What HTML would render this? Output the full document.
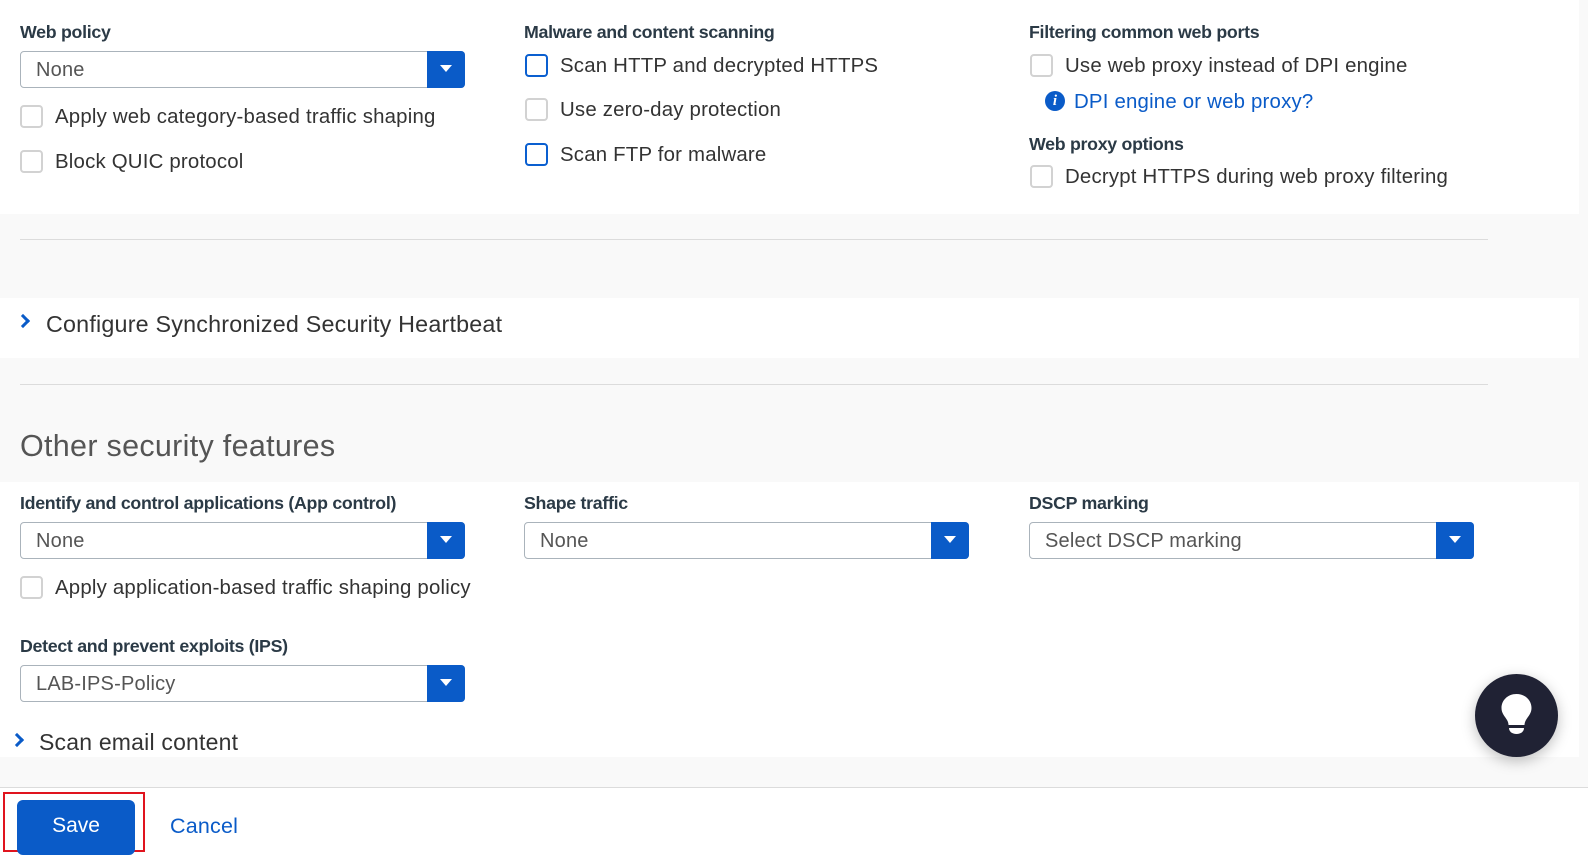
<!DOCTYPE html>
<html><head><meta charset="utf-8"><style>
*{box-sizing:border-box;margin:0;padding:0}
body{width:1588px;height:859px;background:#f9f9f9;font-family:"Liberation Sans",sans-serif;color:#333;position:relative;overflow:hidden}
.a{position:absolute}
.w{position:absolute;left:0;width:1579px;background:#fff}
.lbl{position:absolute;font-size:17.8px;font-weight:bold;color:#2b3a46;letter-spacing:-0.3px}
.t{position:absolute;font-size:20.4px;color:#333;white-space:nowrap;letter-spacing:0.2px;margin-top:2px}
.cb{position:absolute;width:23px;height:23px;border:2px solid #d2d2d2;border-radius:4px;background:#fff}
.cb.b{border-color:#0a5fd0}
.sel{position:absolute;width:445px;height:37px;border:1px solid #aab3bb;border-radius:4px;background:#fff}
.sel span{position:absolute;left:15px;top:7px;font-size:20px;color:#555;letter-spacing:0.2px}
.sel i{position:absolute;right:-1px;top:-1px;width:38px;height:37px;background:#0a5bc8;border-radius:0 4px 4px 0}
.sel i:after{content:"";position:absolute;left:13px;top:14px;border-left:6px solid transparent;border-right:6px solid transparent;border-top:7px solid #fff}
.hr{position:absolute;left:20px;width:1468px;height:1px;background:#dcdcdc}
.chev{position:absolute;width:10px;height:10px;border-right:3px solid #0a5bc8;border-bottom:3px solid #0a5bc8;transform:rotate(-45deg)}
</style></head><body>
<div class="w" style="top:0;height:214px"></div>
<div class="w" style="top:298px;height:60px"></div>
<div class="w" style="top:482px;height:275px"></div>
<div class="hr" style="top:239px"></div>
<div class="hr" style="top:384px"></div>

<div class="lbl" style="left:20px;top:22px">Web policy</div>
<div class="sel" style="left:20px;top:51px"><span>None</span><i></i></div>
<div class="cb" style="left:20px;top:105px"></div><div class="t" style="left:55px;top:104px">Apply web category-based traffic shaping</div>
<div class="cb" style="left:20px;top:150px"></div><div class="t" style="left:55px;top:149px">Block QUIC protocol</div>

<div class="lbl" style="left:524px;top:22px">Malware and content scanning</div>
<div class="cb b" style="left:525px;top:54px"></div><div class="t" style="left:560px;top:53px">Scan HTTP and decrypted HTTPS</div>
<div class="cb" style="left:525px;top:98px"></div><div class="t" style="left:560px;top:97px">Use zero-day protection</div>
<div class="cb b" style="left:525px;top:143px"></div><div class="t" style="left:560px;top:142px">Scan FTP for malware</div>

<div class="lbl" style="left:1029px;top:22px">Filtering common web ports</div>
<div class="cb" style="left:1030px;top:54px"></div><div class="t" style="left:1065px;top:53px">Use web proxy instead of DPI engine</div>
<div class="a" style="left:1045px;top:91px;width:20px;height:20px;border-radius:50%;background:#0a5bc8;color:#fff;font:italic bold 15px 'Liberation Serif',serif;text-align:center;line-height:20px">i</div>
<div class="t" style="left:1074px;top:89px;color:#0a5bc8">DPI engine or web proxy?</div>
<div class="lbl" style="left:1029px;top:134px">Web proxy options</div>
<div class="cb" style="left:1030px;top:165px"></div><div class="t" style="left:1065px;top:164px">Decrypt HTTPS during web proxy filtering</div>

<div class="chev" style="left:18px;top:316px"></div>
<div class="t" style="left:46px;top:309px;font-size:23.3px;color:#333">Configure Synchronized Security Heartbeat</div>

<div class="t" style="left:20px;top:427px;font-size:30.5px;color:#555;letter-spacing:0.3px">Other security features</div>

<div class="lbl" style="left:20px;top:493px">Identify and control applications (App control)</div>
<div class="sel" style="left:20px;top:522px"><span>None</span><i></i></div>
<div class="cb" style="left:20px;top:576px"></div><div class="t" style="left:55px;top:575px">Apply application-based traffic shaping policy</div>
<div class="lbl" style="left:524px;top:493px">Shape traffic</div>
<div class="sel" style="left:524px;top:522px"><span>None</span><i></i></div>
<div class="lbl" style="left:1029px;top:493px">DSCP marking</div>
<div class="sel" style="left:1029px;top:522px"><span>Select DSCP marking</span><i></i></div>

<div class="lbl" style="left:20px;top:636px">Detect and prevent exploits (IPS)</div>
<div class="sel" style="left:20px;top:665px"><span>LAB-IPS-Policy</span><i></i></div>

<div class="chev" style="left:12px;top:735px"></div>
<div class="t" style="left:39px;top:727px;font-size:23px">Scan email content</div>

<div class="a" style="left:0;top:787px;width:1588px;height:72px;background:#fff;border-top:1px solid #dcdcdc"></div>
<div class="a" style="left:3px;top:792px;width:142px;height:60px;border:2px solid #e0141e"></div>
<div class="a" style="left:17px;top:800px;width:118px;height:55px;background:#0a5bc8;border-radius:6px;color:#fff;font-size:21px;text-align:center;line-height:52px">Save</div>
<div class="t" style="left:170px;top:812px;font-size:21.5px;color:#0a5bc8">Cancel</div>

<div class="a" style="left:1475px;top:674px;width:83px;height:83px;border-radius:50%;background:#202234;box-shadow:0 4px 14px rgba(0,0,0,.25)">
<svg width="83" height="83" viewBox="0 0 83 83"><path d="M41.5 20c-9 0-15 6.5-15 14 0 5.5 3.5 8.5 5.5 12 1 1.7 1.5 3.5 1.5 5h16c0-1.5.5-3.3 1.5-5 2-3.5 5.5-6.5 5.5-12 0-7.5-6-14-15-14z" fill="#fff"/><path d="M34 54h15c0 3.5-3 6-7.5 6S34 57.5 34 54z" fill="#fff"/></svg></div>
</body></html>
